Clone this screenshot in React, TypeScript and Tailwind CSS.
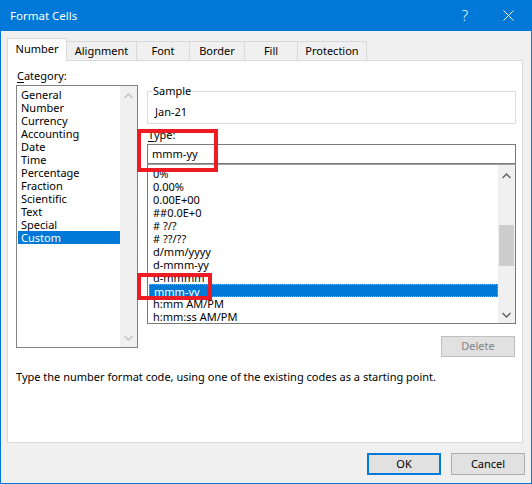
import React from 'react';

const FONT = { fontFamily: '"Segoe UI", "Noto Sans", Arial, sans-serif' };

const CATEGORIES = [
  'General',
  'Number',
  'Currency',
  'Accounting',
  'Date',
  'Time',
  'Percentage',
  'Fraction',
  'Scientific',
  'Text',
  'Special',
  'Custom',
];

const FORMATS = [
  '0%',
  '0.00%',
  '0.00E+00',
  '##0.0E+0',
  '# ?/?',
  '# ??/??',
  'd/mm/yyyy',
  'd-mmm-yy',
  'd-mmmm',
  'mmm-yy',
  'h:mm AM/PM',
  'h:mm:ss AM/PM',
];

const TABS = [
  { label: 'Alignment', w: 'w-[70px]' },
  { label: 'Font', w: 'w-[53px]' },
  { label: 'Border', w: 'w-[55px]' },
  { label: 'Fill', w: 'w-[53px]' },
  { label: 'Protection', w: 'w-[69px]' },
];

const Chevron: React.FC<{ up?: boolean; color: string }> = ({ up, color }) => (
  <svg width="9" height="6" viewBox="0 0 9 6">
    <polyline
      points={up ? '0.5,5 4.5,1 8.5,5' : '0.5,1 4.5,5 8.5,1'}
      fill="none"
      stroke={color}
      strokeWidth="1.4"
    />
  </svg>
);

const App: React.FC = () => {
  return (
    <div
      className="relative flex h-[484px] w-[532px] flex-col border-x border-b border-[#0078d7] bg-[#f0f0f0] text-[11px] text-black"
      style={FONT}
    >
      {/* title bar */}
      <div className="flex h-[31px] shrink-0 items-center bg-[#0078d7] pl-[9px] text-white">
        <span className="text-[11.5px] leading-none">Format Cells</span>
        <span className="ml-auto mr-[35px] text-[15px] font-light leading-none">?</span>
        <svg width="11" height="11" viewBox="0 0 11 11" className="mr-[17px]">
          <path d="M0.5 0.5 L10.5 10.5 M10.5 0.5 L0.5 10.5" stroke="#fff" strokeWidth="1" />
        </svg>
      </div>

      {/* tabs */}
      <div className="relative z-10 ml-[6px] mt-[7px] flex h-[22px] items-end">
        <div className="-mb-px flex h-[23px] w-[60px] items-center justify-center border-x border-t border-[#d9d9d9] bg-white pb-[2px]">
          Number
        </div>
        {TABS.map((t) => (
          <div
            key={t.label}
            className={`flex h-[19px] ${t.w} items-center justify-center border-r border-t border-[#d9d9d9] bg-[#f0f0f0]`}
          >
            {t.label}
          </div>
        ))}
      </div>

      {/* panel */}
      <div className="ml-[6px] flex h-[383px] w-[516px] flex-col border border-[#d9d9d9] bg-white pl-[8px]">
        <div className="flex">
          {/* category column */}
          <div className="flex w-[122px] flex-col">
            <div className="mt-[7px] h-[16px] pl-px leading-[16px]">
              <span className="underline underline-offset-2">C</span>ategory:
            </div>
            <div className="mt-px flex h-[263px] border border-[#828282] bg-white">
              <div className="flex flex-1 flex-col pl-px pt-[2px]">
                {CATEGORIES.map((c) => (
                  <div
                    key={c}
                    className={`h-[13px] pl-[3px] leading-[13px] ${
                      c === 'Custom' ? 'bg-[#0078d7] text-white' : ''
                    }`}
                  >
                    {c}
                  </div>
                ))}
              </div>
              <div className="flex w-[17px] flex-col items-center justify-between bg-[#f0f0f0] pb-[6px] pt-[7px]">
                <Chevron up color="#c2c2c2" />
                <Chevron color="#c2c2c2" />
              </div>
            </div>
          </div>

          {/* type column */}
          <div className="ml-[9px] flex w-[369px] flex-col">
            <div className="relative mt-[30px] h-[33px] border border-[#dcdcdc]">
              <span className="absolute -top-[9px] left-[4px] bg-white px-px leading-[16px]">
                Sample
              </span>
              <div className="pl-[7px] pt-[12px] leading-[16px]">Jan-21</div>
            </div>
            <div className="mt-[3px] h-[17px] pl-px leading-[16px]">
              <span className="underline underline-offset-2">T</span>ype:
            </div>
            <div className="h-[20px] border border-[#7a7a7a] pl-[4px] leading-[18px]">mmm-yy</div>
            <div className="flex h-[160px] border border-[#7a7a7a] border-t-[#a0a0a0] bg-white">
              <div className="flex-1 overflow-hidden pt-[6px]">
                <div className="-mt-[4px] pl-px">
                  {FORMATS.map((f) => (
                    <div
                      key={f}
                      className={`h-[13px] pl-[4px] leading-[13px] ${
                        f === 'mmm-yy'
                          ? 'border border-dotted border-[#e0a040] bg-[#0078d7] pl-[3px] leading-[11px] text-white'
                          : ''
                      }`}
                    >
                      {f}
                    </div>
                  ))}
                </div>
              </div>
              <div className="flex w-[17px] flex-col items-center bg-[#f0f0f0] pb-[5px] pt-[8px]">
                <Chevron up color="#606060" />
                <div className="mt-[46px] h-[41px] w-[15px] bg-[#cdcdcd]" />
                <div className="mt-auto">
                  <Chevron color="#606060" />
                </div>
              </div>
            </div>
            <div className="mt-[12px] flex justify-end pr-px">
              <div className="flex h-[21px] w-[74px] items-center justify-center border border-[#bfbfbf] bg-[#e1e1e1] text-[#838383]">
                Delete
              </div>
            </div>
          </div>
        </div>

        <div className="mt-[12px] leading-[16px]">
          Type the number format code, using one of the existing codes as a starting point.
        </div>
      </div>

      {/* buttons */}
      <div className="mt-[10px] flex justify-end gap-[10px] pr-[6px]">
        <div className="flex h-[22px] w-[74px] items-center justify-center border-2 border-[#0078d7] bg-[#e1e1e1]">
          OK
        </div>
        <div className="flex h-[22px] w-[74px] items-center justify-center border border-[#adadad] bg-[#e1e1e1]">
          Cancel
        </div>
      </div>

      {/* red highlight boxes */}
      <div className="pointer-events-none absolute left-[136px] top-[129px] h-[43px] w-[81px] border-4 border-[#ed1c24]" />
      <div className="pointer-events-none absolute left-[136px] top-[273px] h-[27px] w-[75px] border-4 border-[#ed1c24]" />
    </div>
  );
};

export default App;
